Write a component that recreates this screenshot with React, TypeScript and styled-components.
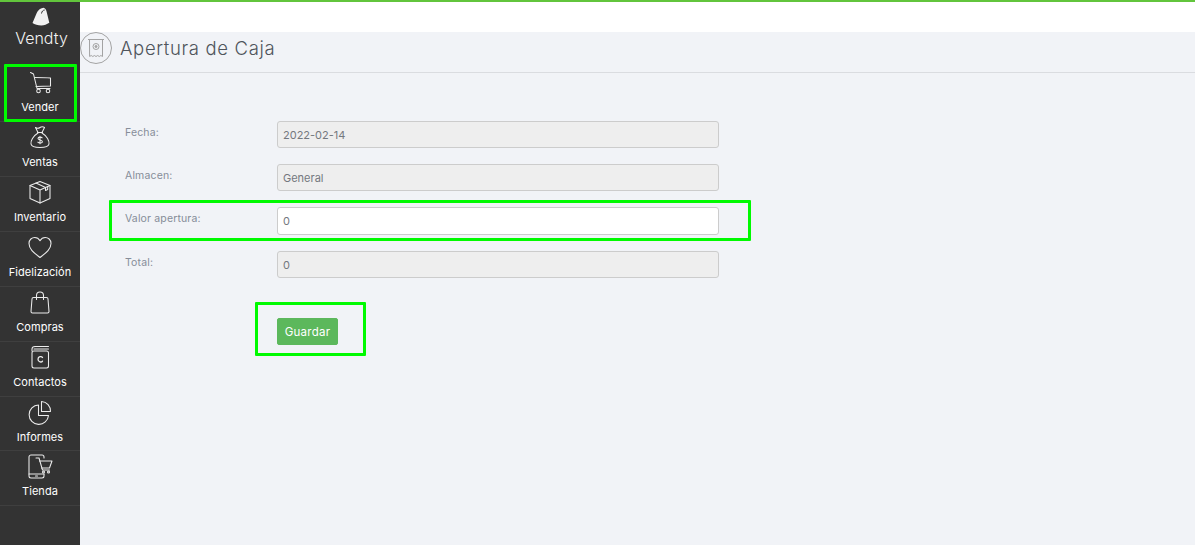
import React from "react";
import styled, { createGlobalStyle } from "styled-components";

const Global = createGlobalStyle`
  html, body { margin: 0; padding: 0; height: 100%; background: #f1f3f7; overflow: hidden; }
  * { box-sizing: border-box; }
  body { font-family: "Inter", "Open Sans", "Liberation Sans", sans-serif; }
`;

const Page = styled.div`
  width: 1195px; height: 545px; display: flex; flex-direction: column; position: relative; overflow: hidden;
`;
const TopLine = styled.div`height: 2px; background: #62c53c; flex: none;`;
const Body = styled.div`flex: 1; display: flex; min-height: 0;`;
const Sidebar = styled.nav`width: 80px; flex: none; background: #333333; display: flex; flex-direction: column;`;
const Logo = styled.div`
  height: 65px; display: flex; flex-direction: column; align-items: center; padding-top: 5px; color: #f2f2f2;
`;
const LogoMark = styled.svg`width: 18px; height: 19px; fill: #f2f2f2; flex: none; margin-left: 2px;`;
const LogoText = styled.span`font-size: 16px; line-height: 20px; font-weight: 300; margin: 2px 0 0 3px; letter-spacing: 0;`;
const NavItem = styled.a<{ $short?: boolean }>`
  height: ${(p) => (p.$short ? 54 : 55)}px; display: flex; flex-direction: column; align-items: center; border-bottom: 1px solid #3f3f3f;
  color: #fff; font-size: 11px; line-height: 14px; font-weight: 400; padding-top: 2px; letter-spacing: 0.05px;
`;
const NavIcon = styled.svg`
  width: 26px; height: 26px; fill: none; stroke: #ececec; stroke-width: 1.05; stroke-linecap: round; stroke-linejoin: round; margin-bottom: 5px; flex: none;
`;
const Main = styled.main`flex: 1; display: flex; flex-direction: column; min-width: 0;`;
const WhiteStrip = styled.div`height: 30px; background: #fff; flex: none;`;
const Header = styled.header`
  height: 41px; flex: none; display: flex; align-items: center; gap: 8px; border-bottom: 1px solid #dadce0; padding-bottom: 8px;
`;
const HeaderBadge = styled.svg`width: 32px; height: 32px; flex: none; fill: none; stroke: #a3a3a3; stroke-width: 1;`;
const Title = styled.h1`margin: 0; font-size: 18.5px; line-height: 24px; font-weight: 300; color: #4f555c; letter-spacing: 0.65px;`;
const Form = styled.form`
  padding: 48px 0 0 45px; display: grid; grid-template-columns: 152px 442px; row-gap: 16px; align-items: start;
`;
const Label = styled.label`font-size: 10.5px; line-height: 14px; color: #868d99; padding-top: 5px; letter-spacing: 0.15px;`;
const Field = styled.input<{ $tall?: boolean }>`
  width: 442px; height: ${(p) => (p.$tall ? 28 : 27)}px; border: 1px solid #cccccc; border-radius: 3px; padding: 0 5px;
  font: 400 11px "Inter", "Open Sans", sans-serif; color: #74787e; background: #eeeeee; outline: none;
  &:not(:disabled) { background: #fff; }
  &:disabled { opacity: 1; -webkit-text-fill-color: #74787e; }
`;
const Button = styled.button`
  grid-column: 2; justify-self: start; width: 61px; height: 27px; margin-top: 24px; border: 1px solid #5cb85c; border-radius: 2px;
  background: #5cb85c; color: #fff; font: 400 11.5px "Inter", "Open Sans", sans-serif; padding: 0; letter-spacing: 0.25px;
`;
const Highlight = styled.div<{ $x: number; $y: number; $w: number; $h: number }>`
  position: absolute; left: ${(p) => p.$x}px; top: ${(p) => p.$y}px; width: ${(p) => p.$w}px; height: ${(p) => p.$h}px;
  border: 3px solid #00fa00; border-radius: 1px; pointer-events: none;
`;

const items: [string, React.ReactNode][] = [
  ["Vender", <><path d="M3.500 3.500l3 1.500 3.500 14.500h13" /><path d="M7.500 8.500c5 0 10.500 0 16 .5v8l-14.500 .5" /><circle cx="11.500" cy="22" r="1.800" /><circle cx="21" cy="22" r="1.800" /></>],
  ["Ventas", <><path d="M8.500 3.500c1.500 1 3 1 4.500 0s3-1 4.500 0l-2.500 5h-4z" /><path d="M10.500 8.500h5" /><path d="M11 9C6 12 3.500 17 4 20c.4 2.500 3 3.500 9 3.500s8.600-1 9-3.500c.5-3-2-8-7-11" /><path d="M15.200 13.800c-1-1-4-1-4.200.6-.2 2 4.400 1.200 4.400 3.300 0 1.600-3.300 1.700-4.600.5M13 12.300v7.500" /></>],
  ["Inventario", <><path d="M13 2.500l10 4v13l-10 4.500-10-4.500v-13z" /><path d="M3 6.500l10 4.500 10-4.500M13 11v13" /><path d="M9 4l9.500 4.500v3l2.200-1V7.500" /></>],
  ["Fidelización", <path d="M13 23.500C8 19.500 2 15.500 2 9.500 2 5.500 5 3.500 7.800 3.500c2.300 0 4.100 1.300 5.200 3.200 1.100-1.900 2.900-3.200 5.200-3.200C21 3.500 24 5.500 24 9.500c0 6-6 10-11 14z" />],
  ["Compras", <><path d="M6.500 8.500h13c1 0 1.500.5 1.500 1.500l1 12.500c0 1-.6 1.500-1.500 1.500h-15c-1 0-1.500-.5-1.500-1.500l1-12.500c0-1 .5-1.500 1.500-1.500z" /><path d="M9.500 10.500V6.500a3.500 3.500 0 0 1 7 0V10.500" /></>],
  ["Contactos", <><path d="M5 7V5C5 3.500 6 2.500 8 2.500h13.500" /><rect x="5" y="7" width="16.500" height="17" rx="2" /><path d="M7 5h14.500" /><path d="M15.500 13.500c-.8-1.300-4.500-1.400-4.500 1.800s3.700 3.100 4.500 1.800" strokeWidth="1.300" /></>],
  ["Informes", <><path d="M11.500 6a9.700 9.700 0 1 0 10 10.500H11.500z" /><path d="M14.500 2.500a9.500 9.500 0 0 1 9 10h-9z" /></>],
  ["Tienda", <><path d="M17 5V4c0-1-.7-2-2-2H4C3 2 2 3 2 4v19c0 1 1 2 2 2h11c1 0 2-1 2-2v-2" /><path d="M2 21h15M8.500 23h2" /><path d="M9 5h3l3.500 12h7" /><path d="M12.500 8h12.500l-2.500 7H14.500" /><circle cx="16.500" cy="19" r="1" /><circle cx="21.500" cy="19" r="1" /></>],
];

export default function App() {
  return (
    <Page>
      <Global />
      <TopLine />
      <Body>
        <Sidebar>
          <Logo>
            <LogoMark viewBox="0 0 18 19" aria-hidden>
              <path d="M4.500 6.500C5.500 4 7 2.500 9 1.500l2.500-.7c1.500.5 2.500 1.800 3 3.500l2.800 11.500c-2.500 1.500-5 2.700-8 2.700-3.200 0-6.800-1-8.800-2.500z" />
              <path d="M9.500 6.500c.3-2 1.500-3.500 3.200-3.500" fill="none" stroke="#333" strokeWidth="1" />
            </LogoMark>
            <LogoText>Vendty</LogoText>
          </Logo>
          {items.map(([label, icon]) => (
            <NavItem key={label} $short={label === "Informes"}>
              <NavIcon viewBox="0 0 26 26" aria-hidden>{icon}</NavIcon>
              {label}
            </NavItem>
          ))}
        </Sidebar>
        <Main>
          <WhiteStrip />
          <Header>
            <HeaderBadge viewBox="0 0 32 32" aria-hidden>
              <circle cx="16" cy="16" r="15.500" />
              <path d="M9.500 7.500h13v17l-1.600-1-1.600 1-1.600-1-1.700 1-1.600-1-1.600 1-1.600-1-1.600 1z" />
              <path d="M8 7.500h16" />
              <circle cx="16" cy="14.500" r="3" />
              <circle cx="16" cy="14.500" r="1" fill="#a3a3a3" />
            </HeaderBadge>
            <Title>Apertura de Caja</Title>
          </Header>
          <Form>
            <Label>Fecha:</Label>
            <Field disabled value="2022-02-14" readOnly />
            <Label>Almacen:</Label>
            <Field disabled value="General" readOnly />
            <Label>Valor apertura:</Label>
            <Field $tall value="0" readOnly />
            <Label>Total:</Label>
            <Field disabled value="0" readOnly />
            <Button type="button">Guardar</Button>
          </Form>
        </Main>
      </Body>
      <Highlight $x={4} $y={64} $w={73} $h={58} />
      <Highlight $x={109} $y={200} $w={642} $h={41} />
      <Highlight $x={255} $y={302} $w={111} $h={54} />
    </Page>
  );
}
